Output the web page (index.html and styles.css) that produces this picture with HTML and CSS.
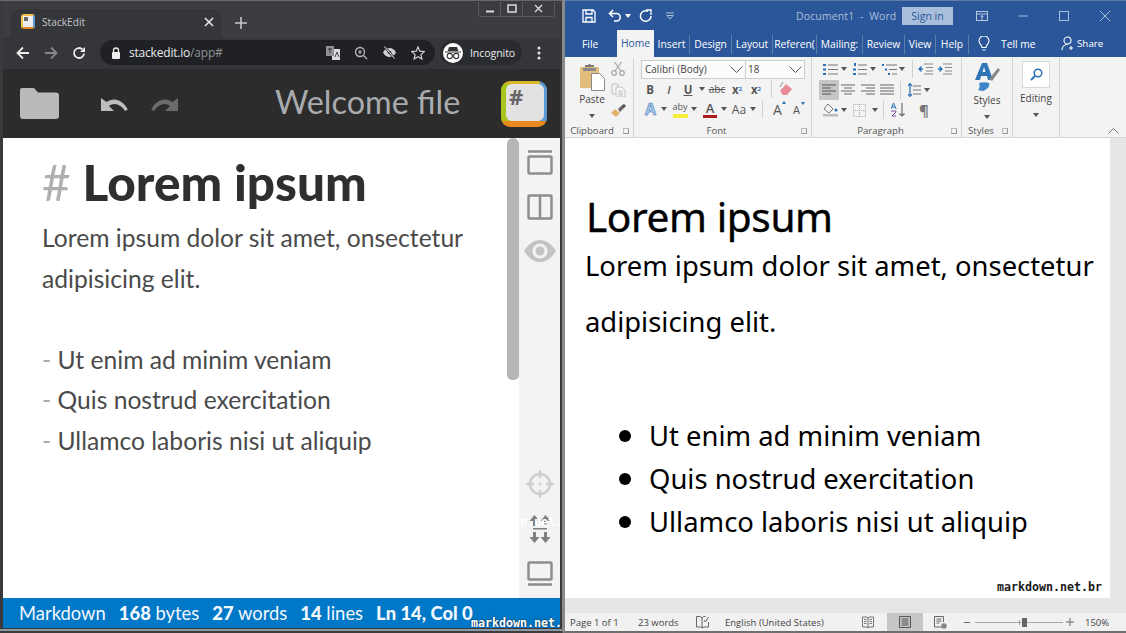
FILE: index.html
```html
<!DOCTYPE html>
<html lang="en">
<head>
<meta charset="utf-8">
<title>StackEdit and Word</title>
<link rel="stylesheet" href="styles.css">
</head>
<body>
<div class="desktop">
  <section class="stack">
    <div class="c-title">
      <div class="tab">
        <span class="favicon"><i></i></span>
        <span class="tab-name">StackEdit</span>
        <svg class="tab-x" width="10" height="10" viewBox="0 0 10 10"><path d="M1 1l8 8M9 1l-8 8" stroke="#e8eaed" stroke-width="1.6"/></svg>
      </div>
      <svg class="tab-plus" width="12" height="12" viewBox="0 0 12 12"><path d="M6 0v12M0 6h12" stroke="#c4c6c9" stroke-width="1.6"/></svg>
      <div class="c-winbtns">
        <span class="c-wb"><svg width="10" height="10" viewBox="0 0 10 10"><path d="M1 7.5h8" stroke="#ddd" stroke-width="2"/></svg></span>
        <span class="c-wb"><svg width="10" height="10" viewBox="0 0 10 10"><rect x="1" y="1" width="8" height="7" fill="none" stroke="#ddd" stroke-width="1.5"/></svg></span>
        <span class="c-wb wide"><svg width="10" height="10" viewBox="0 0 10 10"><path d="M1 1l7 7M8 1l-7 7" stroke="#ddd" stroke-width="1.3"/></svg></span>
      </div>
    </div>
    <div class="c-toolbar">
      <svg class="nav" width="14" height="14" viewBox="0 0 14 14"><path d="M13 7H2M7 1.500L1.500 7 7 12.500" fill="none" stroke="#eceded" stroke-width="1.800"/></svg>
      <svg class="nav" width="14" height="14" viewBox="0 0 14 14"><path d="M1 7h11M7 1.500L12.500 7 7 12.500" fill="none" stroke="#85878a" stroke-width="1.800"/></svg>
      <svg class="nav" width="14" height="14" viewBox="0 0 14 14"><path d="M12 7.500A5 5 0 1 1 10.500 3.400" fill="none" stroke="#eceded" stroke-width="1.800"/><path d="M13 1v5H8z" fill="#eceded"/></svg>
      <div class="omni">
        <svg width="10" height="12" viewBox="0 0 10 12"><path d="M2.500 5V3.500a2.500 2.500 0 0 1 5 0V5" fill="none" stroke="#eee" stroke-width="1.300"/><rect x="1" y="5" width="8" height="7" rx="1" fill="#eee"/></svg>
        <span class="url"><b>stackedit.io</b>/app#</span>
        <span class="omni-icons">
          <svg width="14" height="15" viewBox="0 0 14 15"><rect x="6" y="4" width="8" height="11" fill="#ddd"/><rect x="0" y="1" width="8" height="10" fill="#8f9194"/><path d="M2 4h4M4 3v5M9 12l2-5 2 5" fill="none" stroke="#333" stroke-width=".9"/></svg>
          <svg width="14" height="14" viewBox="0 0 14 14"><circle cx="6" cy="6" r="4.500" fill="none" stroke="#b8babc" stroke-width="1.300"/><path d="M9.500 9.500L13 13M4 6h4M6 4v4" stroke="#b8babc" stroke-width="1.200"/></svg>
          <svg width="15" height="13" viewBox="0 0 15 13"><path d="M1 6.500C3 3 5 2 7.500 2S12 3 14 6.500C12 10 10 11 7.500 11S3 10 1 6.500z" fill="#cfd0d2"/><circle cx="7.500" cy="6.500" r="1.800" fill="#202124"/><path d="M2.500 .5l10 12" stroke="#202124" stroke-width="2.200"/><path d="M2.500 .5l10 12" stroke="#cfd0d2" stroke-width="1.100"/></svg>
          <svg width="14" height="14" viewBox="0 0 14 14"><path d="M7 1l1.800 4.200 4.500.4-3.400 3 1 4.400L7 10.700 3.100 13l1-4.400-3.400-3 4.500-.4z" fill="none" stroke="#d0d1d3" stroke-width="1.200"/></svg>
        </span>
      </div>
      <div class="incog">
        <span class="avatar"><svg width="16" height="14" viewBox="0 0 16 14"><path d="M4 1h8l1.300 4H2.700z M0 5.500h16V6.500H0z" fill="#333"/><circle cx="4.800" cy="10" r="2.600" fill="none" stroke="#333" stroke-width="1.100"/><circle cx="11.200" cy="10" r="2.600" fill="none" stroke="#333" stroke-width="1.100"/></svg></span>
        <span class="incog-t">Incognito</span>
      </div>
      <svg class="kebab" width="4" height="14" viewBox="0 0 4 14"><circle cx="2" cy="2" r="1.500" fill="#e8e8e8"/><circle cx="2" cy="7" r="1.500" fill="#e8e8e8"/><circle cx="2" cy="12" r="1.500" fill="#e8e8e8"/></svg>
    </div>
    <header class="app-head">
      <svg class="folder" width="39" height="31" viewBox="0 0 39 31"><path d="M2 0h12l4 4.500h18a3 3 0 0 1 3 3V28a3 3 0 0 1-3 3H3a3 3 0 0 1-3-3V2a2 2 0 0 1 2-2z" fill="#b9b9b9"/></svg>
      <svg class="undo" width="27" height="16" viewBox="0 0 27 16"><path d="M0 1v13h13l-5-5c5-3.500 11-2.500 16 5l2.800-1.500C22 3 13-.5 5.500 5z" fill="#bdbdbd"/></svg>
      <svg class="redo" width="27" height="16" viewBox="0 0 27 16"><path d="M27 1v13H14l5-5c-5-3.500-11-2.500-16 5L.2 12.500C5 3 14-.5 21.500 5z" fill="#6b6b6b"/></svg>
      <h1 class="doc-name">Welcome file</h1>
      <span class="logo"><span class="logo-in">#</span></span>
    </header>
    <div class="work">
      <article class="md">
        <h2 class="md-h"><span class="hash">#</span> Lorem ipsum</h2>
        <p>Lorem ipsum dolor sit amet, onsectetur<br>adipisicing elit.</p>
        <p class="blank">&nbsp;</p>
        <p><span class="dash">-</span> Ut enim ad minim veniam</p>
        <p><span class="dash">-</span> Quis nostrud exercitation</p>
        <p><span class="dash">-</span> Ullamco laboris nisi ut aliquip</p>
      </article>
      <div class="scroll"><span class="thumb"></span></div>
      <aside class="side">
        <svg width="26" height="25" viewBox="0 0 26 25"><path d="M1 1.500h24" stroke="#8d8d8d" stroke-width="2.500"/><rect x="1.500" y="6.500" width="23" height="17" rx="1" fill="none" stroke="#8d8d8d" stroke-width="2.500"/></svg>
        <svg width="26" height="26" viewBox="0 0 26 26"><rect x="1.500" y="1.500" width="23" height="23" rx="1" fill="none" stroke="#8d8d8d" stroke-width="2.500"/><path d="M13 1v24" stroke="#8d8d8d" stroke-width="2.500"/></svg>
        <svg width="32" height="22" viewBox="0 0 32 22"><path d="M0 11C5 3.500 10 0 16 0s11 3.500 16 11c-5 7.500-10 11-16 11S5 18.500 0 11z" fill="#c3c3c3"/><circle cx="16" cy="11" r="7.500" fill="#f3f3f3"/><circle cx="16" cy="11" r="4.500" fill="#c3c3c3"/></svg>
        <span class="side-gap"></span>
        <svg width="28" height="28" viewBox="0 0 28 28"><circle cx="14" cy="14" r="10" fill="none" stroke="#cfcfcf" stroke-width="2.500"/><path d="M14 0v8M14 20v8M0 14h8M20 14h8" stroke="#cfcfcf" stroke-width="2.500"/><circle cx="14" cy="14" r="1.500" fill="#cfcfcf"/></svg>
        <svg width="22" height="28" viewBox="0 0 22 28"><path d="M5.500 0L10.500 6H7v5H4V6H.5zM16.500 0l5 6H18v5h-3V6h-3.500zM4 13h14v1.500H4zM4 17h3v5h3.500l-5 6-5-6H4zM15 17h3v5h3.500l-5 6-5-6H15z" fill="#7f7f7f"/></svg>
        <svg width="26" height="25" viewBox="0 0 26 25"><rect x="1.500" y="1.500" width="23" height="17" rx="1" fill="none" stroke="#8d8d8d" stroke-width="2.500"/><path d="M1 23.500h24" stroke="#8d8d8d" stroke-width="2.500"/></svg>
      </aside>
    </div>
    <footer class="status">
      <span>Markdown</span><span><b>168</b> bytes</span><span><b>27</b> words</span><span><b>14</b> lines</span><span><b>Ln 14, Col 0</b></span>
    </footer>
    <span class="wm wm-white">markdown.net.br</span>
    <span class="wm wm-left">markdown.net.br</span>
  </section>

  <section class="word">
    <div class="w-title">
      <svg class="qa" width="14" height="14" viewBox="0 0 14 14"><path d="M1 1h10l2 2v10H1z" fill="none" stroke="#fff" stroke-width="1.300"/><path d="M4 1v4h6V1M4 13V8.500h6V13" fill="none" stroke="#fff" stroke-width="1.300"/></svg>
      <svg class="qa undo-q" width="14" height="13" viewBox="0 0 14 13"><path d="M5 1L1.500 4.500 5 8M2 4.500h6.500a3.700 3.700 0 0 1 0 7.500H6" fill="none" stroke="#fff" stroke-width="1.500"/></svg>
      <span class="caret w"></span>
      <svg class="qa redo-q" width="13" height="14" viewBox="0 0 13 14"><path d="M9 2.200A5.300 5.300 0 1 0 12 7" fill="none" stroke="#fff" stroke-width="1.500"/><path d="M7 1h5v5" fill="none" stroke="#fff" stroke-width="1.300"/></svg>
      <svg class="qa cust" width="8" height="8" viewBox="0 0 8 8"><path d="M0 1h8M.8 3.500h6.400L4 7z" fill="none" stroke="#a9bedb"/></svg>
      <span class="doc-title">Document1&nbsp; -&nbsp; Word</span>
      <span class="signin">Sign in</span>
      <svg class="rd" width="12" height="10" viewBox="0 0 12 10"><rect x=".5" y=".5" width="11" height="9" fill="none" stroke="#b9c9e2"/><path d="M.5 3h11M6 9V4.500M4.500 6L6 4.500 7.500 6" fill="none" stroke="#b9c9e2"/></svg>
      <svg class="wc min" width="9" height="2" viewBox="0 0 9 2"><path d="M0 1h9" stroke="#a9bedb"/></svg>
      <svg class="wc max" width="10" height="10" viewBox="0 0 10 10"><rect x=".5" y=".5" width="9" height="9" fill="none" stroke="#a9bedb"/></svg>
      <svg class="wc cls" width="10" height="10" viewBox="0 0 10 10"><path d="M0 0l10 10M10 0L0 10" stroke="#a9bedb"/></svg>
    </div>
    <nav class="w-tabs">
      <span class="wt file">File</span>
      <span class="wt home">Home</span>
      <span class="wt t1">Insert</span>
      <span class="wt t2">Design</span>
      <span class="wt t3">Layout</span>
      <span class="wt t4 clip">Referen(</span>
      <span class="wt t5 clip">Mailing:</span>
      <span class="wt t6">Review</span>
      <span class="wt t7">View</span>
      <span class="wt t8">Help</span>
      <svg class="bulb" width="12" height="16" viewBox="0 0 12 16"><path d="M4 11.500C4 9 1 8 1 5a5 5 0 0 1 10 0c0 3-3 4-3 6.500zM4.500 14h3" fill="none" stroke="#fff" stroke-width="1.100"/></svg>
      <span class="tell">Tell me</span>
      <svg class="share-i" width="13" height="15" viewBox="0 0 13 15"><circle cx="6.500" cy="4.500" r="3.500" fill="none" stroke="#fff" stroke-width="1.100"/><path d="M1 14c0-3 2-5.500 5.500-5.500M10 10v4M8 12h4" fill="none" stroke="#fff" stroke-width="1.100"/></svg>
      <span class="share">Share</span>
    </nav>
    <div class="ribbon">
      <div class="grp g-clip">
        <div class="gbody clip-body">
          <div class="paste">
            <svg width="25" height="27" viewBox="0 0 25 27"><rect x="0" y="3" width="19" height="21" rx="1" fill="#e2bd7c"/><path d="M5 3h9V1H11l-1-1H9L8 1H5z" fill="#7a7a7a"/><path d="M3 4h13v3H3z" fill="#8a8a8a"/><path d="M11.500 9.500h8l5 5v12h-13z" fill="#fff" stroke="#8a8a8a"/></svg>
            <span class="blabel">Paste</span>
            <span class="caret"></span>
          </div>
          <div class="clip-icons">
            <svg width="14" height="14" viewBox="0 0 14 14"><circle cx="3" cy="11" r="2.300" fill="none" stroke="#a7a7a7" stroke-width="1.200"/><circle cx="11" cy="11" r="2.300" fill="none" stroke="#a7a7a7" stroke-width="1.200"/><path d="M4 9L10.500 0M10 9L3.500 0" stroke="#a7a7a7" stroke-width="1.200"/></svg>
            <svg width="15" height="14" viewBox="0 0 15 14"><path d="M1 1h6v3M1 1v10h4" fill="none" stroke="#c2c2c2"/><path d="M5 4h6l3 3v7H5z" fill="#f7f7f7" stroke="#c2c2c2"/><path d="M7 8h5M7 10h5M7 12h5" stroke="#c2c2c2"/></svg>
            <svg width="15" height="13" viewBox="0 0 15 13"><path d="M7 5l3-3 2 3-3 3z" fill="#666"/><path d="M10 2l3-2 2 2-3 3z" fill="#555"/><path d="M4 5l5 4-4 4-5-4z" fill="#e0b46a"/></svg>
          </div>
        </div>
        <div class="glabel">Clipboard<span class="launch"></span></div>
      </div>

      <div class="grp g-font">
        <div class="gbody col">
          <div class="fontbox">
            <span class="fb fb-name">Calibri (Body)<svg class="chev" width="13" height="7" viewBox="0 0 13 7"><path d="M.5.500l6 6 6-6" fill="none" stroke="#555"/></svg></span>
            <span class="fb fb-size">18<svg class="chev" width="13" height="7" viewBox="0 0 13 7"><path d="M.5.500l6 6 6-6" fill="none" stroke="#555"/></svg></span>
          </div>
          <div class="row r-font2">
            <span class="ic w18 bold">B</span>
            <span class="ic w20 ital">I</span>
            <span class="ic w18 und">U</span>
            <span class="ic w10"><span class="caret"></span></span>
            <span class="ic w20 strike">abc</span>
            <span class="ic w20 bold">x<sub>2</sub></span>
            <span class="ic w18 bold">x<sup>2</sup></span>
            <span class="vsep s1"></span>
            <svg width="15" height="14" viewBox="0 0 15 14"><path d="M2 9l6-7 6 5-5 6H5z" fill="#e98a96"/><path d="M2 5L5 0" stroke="#888"/></svg>
          </div>
          <div class="row r-font3">
            <span class="ic w17 atext">A</span>
            <span class="ic w9"><span class="caret"></span></span>
            <span class="ic w18 hl">aby<i class="hl-bar"></i></span>
            <span class="ic w10"><span class="caret"></span></span>
            <span class="ic w18 ared">A<i class="red-bar"></i></span>
            <span class="ic w10"><span class="caret"></span></span>
            <span class="ic w18 aa">Aa</span>
            <span class="ic w9"><span class="caret"></span></span>
            <span class="vsep s2"></span>
            <span class="ic w19 big">A<i class="up"></i></span>
            <span class="ic w19 small">A<i class="dn"></i></span>
          </div>
        </div>
        <div class="glabel">Font<span class="launch"></span></div>
      </div>

      <div class="grp g-para">
        <div class="gbody col para-body">
          <div class="row r-p1">
            <svg width="15" height="13" viewBox="0 0 15 13"><path d="M5 2h10M5 6.500h10M5 11h10" stroke="#777" stroke-width="1.200"/><path d="M0 1h3v2H0zM0 5.500h3v2H0zM0 10h3v2H0z" fill="#2b6fb5"/></svg><span class="ic w11"><span class="caret"></span></span>
            <svg width="14" height="13" viewBox="0 0 14 13"><path d="M5 2h9M5 6.500h9M5 11h9" stroke="#777" stroke-width="1.200"/><path d="M1 0h2v3H1zM0 5.500h3v2H0zM0 10h3v2H0z" fill="#2b6fb5"/></svg><span class="ic w11"><span class="caret"></span></span>
            <svg width="15" height="13" viewBox="0 0 15 13"><path d="M4 2h11M7 6.500h8M10 11h5" stroke="#777" stroke-width="1.200"/><path d="M0 1h2v2H0zM3 5.500h2v2H3zM6 10h2v2H6z" fill="#2b6fb5"/></svg><span class="ic w9"><span class="caret"></span></span>
            <span class="vsep s3"></span>
            <svg width="15" height="12" viewBox="0 0 15 12"><path d="M6 1h9M8 4.500h7M8 8h7M6 11h9" stroke="#888" stroke-width="1.100"/><path d="M5 6H1M3.500 3.500L1 6l2.500 2.500" fill="none" stroke="#2b6fb5" stroke-width="1.300"/></svg>
            <svg class="g5" width="15" height="12" viewBox="0 0 15 12"><path d="M6 1h9M8 4.500h7M8 8h7M6 11h9" stroke="#888" stroke-width="1.100"/><path d="M1 6h4M2.500 3.500L5 6 2.500 8.500" fill="none" stroke="#2b6fb5" stroke-width="1.300"/></svg>
          </div>
          <div class="row r-p2">
            <span class="al on"><svg width="14" height="11" viewBox="0 0 14 11"><path d="M0 1h14M0 4h9M0 7h14M0 10h9" stroke="#555" stroke-width="1.100"/></svg></span>
            <span class="al"><svg width="14" height="11" viewBox="0 0 14 11"><path d="M0 1h14M3 4h8M0 7h14M3 10h8" stroke="#666" stroke-width="1.100"/></svg></span>
            <span class="al"><svg width="14" height="11" viewBox="0 0 14 11"><path d="M0 1h14M5 4h9M0 7h14M5 10h9" stroke="#666" stroke-width="1.100"/></svg></span>
            <span class="al"><svg width="14" height="11" viewBox="0 0 14 11"><path d="M0 1h14M0 4h14M0 7h14M0 10h14" stroke="#666" stroke-width="1.100"/></svg></span>
            <span class="vsep s4"></span>
            <svg width="13" height="14" viewBox="0 0 13 14"><path d="M5 3h8M5 7h8M5 11h8" stroke="#777" stroke-width="1.200"/><path d="M2 1v12M0 3l2-2.500L4 3M0 11l2 2.500L4 11" fill="none" stroke="#2b6fb5" stroke-width="1.200"/></svg><span class="ic w11"><span class="caret"></span></span>
          </div>
          <div class="row r-p3">
            <svg width="15" height="14" viewBox="0 0 15 14"><path d="M5 1l5 5-4 4-5-4z" fill="#f6f6f6" stroke="#777"/><path d="M0 11h15v2.500H0z" fill="#bbb"/><circle cx="13" cy="7" r="1.500" fill="#2b6fb5"/></svg><span class="ic w11 p3a"><span class="caret"></span></span>
            <svg width="13" height="13" viewBox="0 0 13 13"><rect x=".5" y=".5" width="12" height="12" fill="none" stroke="#aaa" stroke-dasharray="1 1"/><path d="M6.500 0v13M0 6.500h13" stroke="#aaa" stroke-dasharray="1 1"/></svg><span class="ic w11 p3c"><span class="caret"></span></span>
            <span class="vsep s5"></span>
            <span class="sort"><svg width="14" height="14" viewBox="0 0 14 14"><path d="M11 0v13M8.500 10.500L11 13l2.500-2.500" fill="none" stroke="#666" stroke-width="1.100"/><path d="M0 6l2.500-6L5 6M1 4h3" fill="none" stroke="#2b6fb5"/><path d="M0 8h5v1L1 13h4" fill="none" stroke="#7a4fa0"/></svg></span>
            <span class="pil">¶</span>
          </div>
        </div>
        <div class="glabel">Paragraph<span class="launch"></span></div>
      </div>

      <div class="grp g-sty">
        <div class="gbody large">
          <svg width="26" height="28" viewBox="0 0 26 28"><path d="M8 0h5l6 17h-5l-1-4H7l-1 4H1zM8.500 9h3L10 4z" fill="#2f75b5"/><path d="M15 16l9-11 2 2-8 11z" fill="#888"/><path d="M5 20c3-1 7-1 10 0 1 3-1 6-6 8-2 0-4-1-5-1 2-2 2-4 1-7z" fill="#3d85c6"/></svg>
          <span class="blabel">Styles</span>
          <span class="caret"></span>
        </div>
        <div class="glabel">Styles<span class="launch"></span></div>
      </div>

      <div class="grp g-edit">
        <div class="gbody large">
          <span class="findbox"><svg width="13" height="13" viewBox="0 0 13 13"><circle cx="8" cy="5" r="3.800" fill="none" stroke="#2b6fb5" stroke-width="1.500"/><path d="M5 8l-4 4" stroke="#2b6fb5" stroke-width="1.800"/></svg></span>
          <span class="blabel">Editing</span>
          <span class="caret"></span>
        </div>
      </div>
      <div class="collapse"><svg width="11" height="6" viewBox="0 0 11 6"><path d="M.5 5.500l5-5 5 5" fill="none" stroke="#777"/></svg></div>
    </div>
    <div class="w-doc">
      <div class="page">
        <h2 class="w-h">Lorem ipsum</h2>
        <p class="w-p">Lorem ipsum dolor sit amet, onsectetur adipisicing elit.</p>
        <ul class="w-ul">
          <li>Ut enim ad minim veniam</li>
          <li>Quis nostrud exercitation</li>
          <li>Ullamco laboris nisi ut aliquip</li>
        </ul>
        <span class="wm wm-right">markdown.net.br</span>
      </div>
      <div class="w-scroll"></div>
    </div>
    <footer class="w-status">
      <span class="st-page">Page 1 of 1</span>
      <span class="st-words">23 words</span>
      <svg width="13" height="14" viewBox="0 0 13 14"><path d="M.5 1.500h4L6 3v10L4.500 12h-4zM6 3l1.500-1.500h2M12.500 7v5L8 12 6 13" fill="none" stroke="#666"/><path d="M8 5l1.500 2L12.500 2" fill="none" stroke="#666"/></svg>
      <span class="st-lang">English (United States)</span>
      <svg width="12" height="12" viewBox="0 0 12 12"><path d="M.5 1h4.500l1 1 1-1h4.500v10H7l-1 1-1-1H.5zM6 2v9M2 3.500h2.500M2 5.500h2.500M2 7.500h2.500M7.500 3.500H10M7.500 5.500H10M7.500 7.500H10" fill="none" stroke="#666" stroke-width=".9"/></svg>
      <span class="st-print"><svg width="12" height="12" viewBox="0 0 12 12"><path d="M.5.500h11v11H.5zM2.500 3h7M2.500 5h7M2.500 7h7M2.500 9h7" fill="none" stroke="#555"/></svg></span>
      <svg class="st-web" width="13" height="13" viewBox="0 0 13 13"><path d="M8 11H.5V.5h9V6M2.500 3h5M2.500 5h5M2.500 7h3" fill="none" stroke="#666"/><circle cx="10" cy="10" r="2.800" fill="#888"/></svg>
      <span class="z-minus"></span>
      <span class="slider"><i class="tick"></i><i class="knob"></i></span>
      <svg class="z-plus" width="8" height="8" viewBox="0 0 8 8"><path d="M4 0v8M0 4h8" stroke="#666"/></svg>
      <span class="st-zoom">150%</span>
    </footer>
  </section>
</div>
</body>
</html>
```
FILE: styles.css
```css
*{box-sizing:border-box}
html,body{margin:0;padding:0}
body{font-family:"Open Sans",sans-serif;background:#555}
h1,h2,p,ul{margin:0;padding:0;font-weight:normal}
svg{flex:none;display:block}
.desktop{display:flex;width:1126px;height:633px;overflow:hidden}

/* Left window */
.stack{position:relative;width:563px;height:633px;display:flex;flex-direction:column;overflow:hidden;background:#3a3a3c;padding:0 2px 3px 3px;border-top:1px solid #6a6a6a;border-right:1px solid #8a8a8a;border-bottom:2px solid #3d3d3d;box-shadow:inset 0 -2px 0 #8b9aa5}
.c-title{height:37px;flex:none;background:#3c3d41;display:flex;align-items:flex-end;position:relative}
.tab{width:210px;height:29px;margin-left:8px;background:#35363a;border-radius:8px 8px 0 0;display:flex;align-items:center;padding:0 7px 4px 10px}
.favicon{width:14px;height:15px;border-radius:3px;background:#eee;border:2px solid;border-color:#f0c14b #5b9bd5 #e98a1f #f2c84b;display:flex;padding:1px}
.favicon i{width:4px;height:4px;background:#666}
.tab-name{margin-left:7px;font:10.200px "Open Sans",sans-serif;color:#c4c6c9;flex:1}
.tab-plus{margin:0 0 9px 14px}
.c-winbtns{position:absolute;left:475px;top:1px;width:77px;height:15px;display:flex;border:1px solid #5a5b5e;border-top:0;border-radius:0 0 3px 3px}
.c-wb{width:22px;display:flex;align-items:center;justify-content:center;border-right:1px solid #5a5b5e}
.c-wb.wide{flex:1;border-right:0}
.c-toolbar{height:31px;flex:none;background:#35363a;display:flex;align-items:center;padding:0 0 2px 13px}
.nav{margin-right:14px}
.omni{width:335px;height:25px;background:#202124;border-radius:13px;display:flex;align-items:center;padding:0 10px 0 11px}
.url{margin-left:8px;font:12px "Open Sans",sans-serif;color:#8f9194;letter-spacing:-.2px}
.url b{font-weight:400;color:#e8eaed}
.omni-icons{margin-left:auto;display:flex;align-items:center;gap:14px}
.incog{width:82px;height:25px;margin-left:5px;border-radius:13px;background:#2a2b2e;display:flex;align-items:center;padding-left:3px}
.avatar{width:20px;height:20px;border-radius:50%;background:#fff;display:flex;align-items:center;justify-content:center}
.incog-t{margin-left:7px;font:10.600px "Open Sans",sans-serif;color:#e8eaed;letter-spacing:-.1px}
.kebab{margin-left:15px}
.app-head{height:69px;flex:none;background:#2c2c2c;display:flex;align-items:center;padding-left:17px}
.undo{margin-left:42px;margin-top:3px}
.redo{margin-left:23px;margin-top:3px}
.doc-name{margin-left:97px;width:226px;font:32.400px/1 Lato,sans-serif;color:#a9abae;white-space:nowrap;margin-top:-3px}
.logo{width:46px;height:46px;border-radius:9px;background:linear-gradient(0deg,#e98a1f 0 6px,transparent 6px),linear-gradient(90deg,#d9b52a 0 85%,transparent 85%) top/100% 3px no-repeat,linear-gradient(90deg,#a8c71c 0 50%,#5b9bd5 50%);padding:3px 3px 6px 5px;display:block}
.logo-in{display:block;width:100%;height:100%;background:#e2e2e2;border-radius:6px;font:bold 22px/24px "Open Sans",sans-serif;color:#666;padding-left:3px}
.work{flex:1;min-height:0;display:flex;background:#fff}
.md{width:504px;padding:17px 0 0 39px;font-family:Lato,sans-serif;font-size:24.650px;line-height:40.500px;color:#4a4a4a;font-variant-ligatures:none}
.md-h{font:900 49.500px/54px Lato,sans-serif;color:#2f2f2f;margin-bottom:9px}
.hash{color:#b0b0b0;font-weight:400}
.dash{color:#aaa}
.scroll{width:12px;flex:none}
.thumb{display:block;height:242px;background:#b6b6b6;border-radius:6px 6px 5px 5px}
.side{flex:1;background:#f3f3f3;display:flex;flex-direction:column;align-items:center;padding:12px 0 12px}
.side svg{margin-bottom:19px}
.side svg:nth-child(2){margin-bottom:20px}
.side svg:nth-child(3){margin-bottom:0}
.side-gap{flex:1}
.side svg:nth-child(5){margin-bottom:17px}
.side svg:nth-child(6){margin-bottom:18px}
.side svg:nth-child(7){margin-bottom:0}
.status{height:30px;flex:none;background:#0078c8;display:flex;gap:13px;padding-left:16px;align-items:center;font:18.400px Lato,sans-serif;color:#f1f7fc}
.status b{font-weight:900}
.wm{position:absolute;font:bold 11.650px "DejaVu Sans Mono",monospace;white-space:nowrap}
.wm-left{left:471px;top:615px;color:#fff;text-shadow:0 0 2px #222}
.wm-white{left:471px;top:514px;color:#fff}
.wm-right{right:8px;bottom:4px;color:#1a1a1a}

/* Right window */
.word{position:relative;width:563px;height:633px;display:flex;flex-direction:column;overflow:hidden;background:#e6e6e6;border-left:2px solid #8a8a8a;border-bottom:2px solid #6e6e6e}
.w-title{height:30px;flex:none;background:#2b579a;display:flex;align-items:center;border-top:1px solid #5f7da8;position:relative}
.w-title>.qa:first-child{margin-left:17px}
.undo-q{margin-left:12px}
.caret{display:block;width:0;height:0;border:3px solid transparent;border-top:4px solid #555;border-bottom:0}
.caret.w{margin-left:3px;border-top-color:#fff}
.redo-q{margin-left:8px}
.cust{margin-left:14px}
.doc-title{margin-left:122px;width:106px;font-size:10.500px;color:#a9bedb;white-space:nowrap;letter-spacing:.12px}
.signin{width:51px;height:18px;background:#a9bedb;color:#2b579a;font-size:10.500px;line-height:18px;text-align:center}
.rd{margin-left:23px}
.wc.min{margin-left:31px}
.wc.max{margin-left:31px}
.wc.cls{margin-left:31px}
.w-tabs{height:27px;flex:none;background:#2b579a;display:flex;align-items:center;position:relative;font-size:10.300px;color:#fff;padding-left:15px}
.wt{display:block;white-space:nowrap;height:19px;line-height:19px;border-right:1px solid #5f7da8;text-align:center;margin-top:1px}
.file{width:37px;border:0;text-align:left;padding-left:2px}
.home{width:37px;height:27px;line-height:27px;margin-top:0;border:0;background:#f3f3f3;color:#2b579a;align-self:flex-end}
.t1{width:36px}
.t2{width:42px}
.t3{width:41px}
.t4{width:44px}
.t5{width:46px}
.t6{width:42px}
.t7{width:31px}
.t8{width:33px}
.clip{overflow:hidden}
.bulb{margin-left:9px}
.tell{margin-left:11px;width:55px}
.share-i{margin-left:5px}
.share{margin-left:3px;font-size:9.800px}
.ribbon{height:81px;flex:none;background:#f3f3f3;display:flex;border-bottom:1px solid #d6d6d6;position:relative;font-size:10.500px;color:#444}
.grp{display:flex;flex-direction:column;height:79px;margin-top:1px;border-right:1px solid #d3d3d3}
.gbody{flex:1;min-height:0}
.glabel{height:13px;text-align:center;font-size:9.600px;line-height:14px;color:#555;position:relative}
.launch{position:absolute;right:4px;top:4px;width:6px;height:6px;border:1px solid #999;border-top-color:#bbb;border-left-color:#bbb}
.g-clip{width:69px}
.g-clip .glabel{padding-right:14px}
.g-font{width:178px}
.g-font .glabel,.g-para .glabel,.g-sty .glabel{padding-right:12px}
.g-para{width:150px}
.g-sty{width:51px}
.g-edit{width:47px}
.clip-body{display:flex;padding:6px 0 0 14px}
.paste{width:26px;display:flex;flex-direction:column;align-items:center}
.paste .blabel{margin-top:1px}
.paste .caret{margin-top:8px}
.blabel{font-size:10px;line-height:14px;color:#444;white-space:nowrap}
.clip-icons{margin:-2px 0 0 6px;display:flex;flex-direction:column;gap:7px}
.col{display:flex;flex-direction:column}
.fontbox{margin:2px 0 0 7px;width:164px;height:19px;display:flex;border:1px solid #ccc;background:#fbfbfb;font-size:10px;line-height:17px;flex:none}
.fb{display:flex;align-items:center;padding-left:3px;color:#444}
.fb-name{width:104px;border-right:1px solid #ccc}
.fb-size{flex:1;padding-left:2px}
.chev{margin-left:auto;margin-right:2px}
.row{display:flex;align-items:center;height:20px;flex:none}
.r-font2{margin-left:7px}
.r-font3{margin-left:8px}
.ic{display:flex;align-items:center;justify-content:center;position:relative;height:18px;font-size:11.500px;color:#555;flex:none}
.w9{width:9px}.w10{width:10px}.w11{width:11px}.w17{width:17px}.w18{width:18px}.w19{width:19px}.w20{width:20px}
.bold{font-weight:700}
.ital{font-style:italic;font-weight:600}
.und{font-weight:700;text-decoration:underline}
.strike{font-size:10px;text-decoration:line-through}
sub,sup{font-size:6px;line-height:0;color:#2b6fb5}
.vsep{display:block;width:1px;height:18px;background:#cfcfcf;flex:none}
.s1{margin:0 6px}
.s2{margin:0 5px}
.atext{font-size:16px;color:#a9c8e8;font-weight:700;-webkit-text-stroke:.5px #2b6fb5}
.hl{margin-left:3px;font-size:9px;padding-bottom:5px}
.hl-bar{position:absolute;left:2px;right:1px;bottom:0;height:4px;background:#f7ee3a}
.ared{margin-left:2px;font-size:13px;font-weight:600;padding-bottom:3px}
.red-bar{position:absolute;left:2px;right:2px;bottom:0;height:3px;background:#b01c1c}
.aa{margin-left:1px;font-size:12px}
.big{font-size:14px}
.small{font-size:11px}
.up,.dn{position:absolute;right:1px;width:0;height:0;border:2.500px solid transparent}
.up{top:1px;border-bottom:3px solid #2b6fb5;border-top:0}
.dn{top:2px;border-top:3px solid #2b6fb5;border-bottom:0}
.para-body{padding:1px 0 0 11px}
.r-p1 .w11{margin-right:4px}
.s3{margin:0 5px 0 6px}
.g5{margin-left:4px}
.r-p2{height:21px;margin-left:-4px}
.al{width:19.500px;height:20px;display:flex;align-items:center;justify-content:center}
.al.on{background:#c6c6c6}
.s4{margin:0 7px 0 3px}
.p3a{margin-right:4px}
.p3c{margin-left:3px}
.s5{margin:0 7px 0 3px}
.sort{display:block;width:14px}
.pil{margin-left:14px;font-size:15px;font-weight:700;color:#777}
.large{display:flex;flex-direction:column;align-items:center;padding-top:5px}
.g-sty .large svg{margin-bottom:2px}
.large .caret{margin-top:8px}
.findbox{width:28px;height:27px;background:#fff;border:1px solid #d8d8d8;display:flex;align-items:center;justify-content:center;margin-bottom:3px}
.g-edit .large{padding-top:3px}
.collapse{margin-left:auto;align-self:flex-end;margin-right:7px;margin-bottom:3px}
.w-doc{height:475px;flex:none;display:flex}
.page{position:relative;width:545px;height:460px;background:#fff;padding-top:48px;font-family:"Noto Sans",sans-serif;color:#000}
.w-h{font-size:40.600px;font-weight:400;line-height:62px;padding-left:21px;letter-spacing:-.4px;-webkit-text-stroke:.4px #000}
.w-p{font-size:27.400px;line-height:56px;padding:0 12px 0 20px;margin-top:-10px}
.w-ul{list-style:none;margin-top:64px;padding-left:54px;font-size:27.400px;line-height:43px}
.w-ul li{display:flex;align-items:center}
.w-ul li::before{content:"";width:12px;height:12px;border-radius:50%;background:#000;margin-right:18px;flex:none}
.w-scroll{flex:1}
.w-status{flex:1;background:#f1f1f1;display:flex;align-items:center;font-size:9.500px;color:#444}
.st-page{margin-left:5px;width:68px;white-space:nowrap}
.st-words{width:58px;white-space:nowrap}
.st-lang{margin-left:16px;width:137px;white-space:nowrap}
.st-print{width:36px;height:18px;background:#c6c6c6;display:flex;align-items:center;justify-content:center;margin-left:13px}
.st-web{margin-left:11px}
.z-minus{margin-left:17px;width:6px;height:1px;background:#666}
.slider{margin-left:5px;width:88px;height:1px;background:#a8a8a8;position:relative;display:block}
.tick{position:absolute;left:44px;top:-2px;width:1px;height:5px;background:#999}
.knob{position:absolute;left:47px;top:-4px;width:5px;height:9px;background:#666}
.z-plus{margin-left:3px}
.st-zoom{margin-left:11px;white-space:nowrap}
```
